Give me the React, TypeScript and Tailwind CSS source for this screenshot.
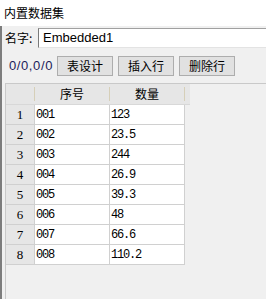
const rows = [
  ['001', '123'],
  ['002', '23.5'],
  ['003', '244'],
  ['004', '26.9'],
  ['005', '39.3'],
  ['006', '48'],
  ['007', '66.6'],
  ['008', '110.2'],
];

const ui = "font-['Noto_Sans_CJK_SC','Liberation_Sans',sans-serif]";
const mono = "font-['Liberation_Mono','Noto_Sans_CJK_SC',monospace]";

function ToolButton({ label }: { label: string }) {
  return (
    <button
      type="button"
      className={`flex h-[20px] w-[56px] items-center justify-center border border-[#adadad] bg-[#e1e1e1] text-[12px] leading-none text-black ${ui}`}
    >
      {label}
    </button>
  );
}

export default function App() {
  return (
    <div className={`flex h-[299px] w-[266px] flex-col overflow-hidden bg-[#f0f0f0] ${ui}`}>
      <div className="h-[26px] shrink-0 bg-white pl-[4px] pt-[5px] text-[12px] leading-[16px] text-black">内置数据集</div>

      <div className="flex min-h-0 flex-1 flex-col border-l-2 border-[#7d7d7d] pt-[2px]">
        <div className="flex h-[20px] shrink-0 items-center">
          <span className="w-[36px] pl-[3px] text-[12px] leading-none text-black">名字:</span>
          <div className="flex h-[20px] flex-1 items-center border-l border-t border-b border-l-[#7a7a7a] border-t-[#a0a0a0] border-b-[#e3e3e3] bg-white pl-[4px] font-['Liberation_Sans',sans-serif] text-[13px] text-black">
            Embedded1
          </div>
        </div>

        <div className="flex h-[35px] shrink-0 items-center">
          <span className="w-[55px] pl-[7px] font-['Liberation_Sans',sans-serif] text-[13px] tracking-[0.6px] text-[#1c1c5a]">0/0,0/0</span>
          <div className="flex gap-[5px]">
            <ToolButton label="表设计" />
            <ToolButton label="插入行" />
            <ToolButton label="删除行" />
          </div>
        </div>

        <div className="ml-[3px] min-h-0 flex-1 border-l border-t border-[#c9c9c9] bg-[#f0f0f0]">
          <div className="flex h-[21px] bg-[#f0f0f0]">
            <div className="flex w-[184px] border-b border-[#d8d8d8] bg-[#e6e6e6]">
              <div className="flex w-[29px] items-center justify-end">
                <span className="h-[14px] w-px bg-[#d6cfb8]" />
              </div>
              <div className="flex w-[75px] items-center">
                <span className="flex-1 text-center text-[12px] leading-none text-black">序号</span>
                <span className="h-[14px] w-px bg-[#d6cfb8]" />
              </div>
              <div className="flex w-[75px] items-center">
                <span className="flex-1 text-center text-[12px] leading-none text-black">数量</span>
                <span className="h-[14px] w-px bg-[#d6cfb8]" />
              </div>
            </div>
          </div>

          {rows.map(([id, qty], i) => (
            <div key={id} className="flex h-[20px]">
              <div className="flex w-[29px] items-center justify-center border-b border-r border-[#d0d0d0] bg-[#e6e6e6] font-['Liberation_Serif',serif] text-[13px] text-black">
                {i + 1}
              </div>
              <div className={`flex w-[75px] items-center border-b border-r border-[#d0d0d0] bg-white pl-[1px] text-[12px] tracking-[-1.2px] text-black ${mono}`}>
                {id}
              </div>
              <div className={`flex w-[75px] items-center border-b border-r border-[#d0d0d0] bg-white pl-[1px] text-[12px] tracking-[-1.2px] text-black ${mono}`}>
                {qty}
              </div>
            </div>
          ))}
        </div>
      </div>
    </div>
  );
}
